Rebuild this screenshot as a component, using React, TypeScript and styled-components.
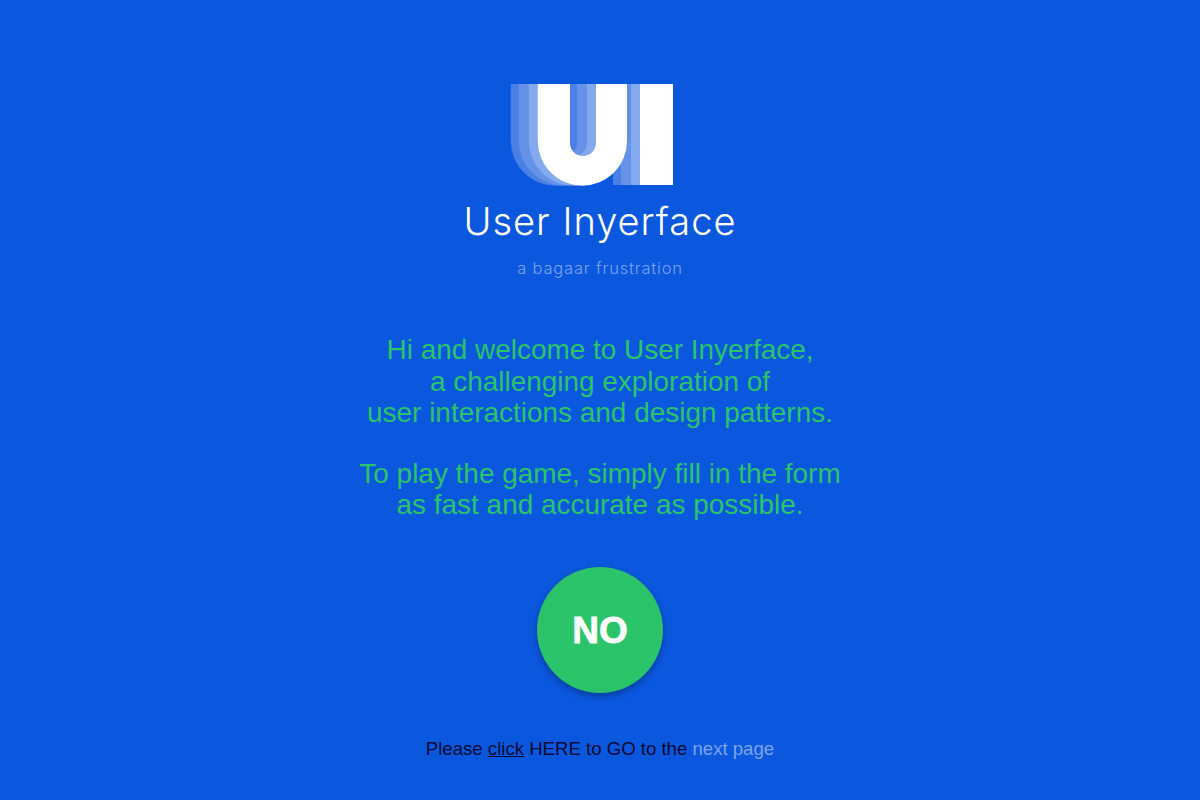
import styled, { createGlobalStyle } from 'styled-components';

const GlobalStyle = createGlobalStyle`
	html, body {
		margin: 0;
		padding: 0;
		background: #0b57dd;
	}
`;

const Page = styled.div`
	height: 800px;
	overflow: hidden;
	display: flex;
	flex-direction: column;
	align-items: center;
	padding-top: 84px;
	box-sizing: border-box;
	background: #0b57dd;
	font-family: "Liberation Sans", Arial, sans-serif;
`;

const Logo = styled.svg`
	display: block;
	width: 180px;
	height: 102px;
	flex: none;
`;

const Title = styled.h1`
	margin: 11px 0 0;
	font-family: Inter, "Open Sans", sans-serif;
	font-weight: 300;
	font-size: 38px;
	letter-spacing: 1px;
	line-height: 48px;
	color: #fff;
`;

const Tagline = styled.div`
	margin-top: 12px;
	font-family: Inter, "Open Sans", sans-serif;
	font-weight: 300;
	font-size: 16.5px;
	letter-spacing: 0.8px;
	line-height: 22px;
	color: #7ea4ee;
`;

const Intro = styled.p<{ $top: number }>`
	margin: ${({ $top }) => $top}px 0 0;
	font-size: 27.95px;
	line-height: 31.5px;
	color: #2bc46a;
	text-align: center;
`;

const NoButton = styled.button`
	width: 126px;
	height: 126px;
	margin-top: 46px;
	flex: none;
	border: 0;
	border-radius: 50%;
	background: #2bc46a;
	box-shadow: 0 3px 6px rgba(0, 0, 0, 0.3);
	color: #fff;
	font-family: "Liberation Sans", Arial, sans-serif;
	font-weight: 700;
	font-size: 37px;
	-webkit-text-stroke: 0.8px #fff;
	padding: 2px 0 0;
`;

const Footer = styled.div`
	margin-top: 45px;
	font-size: 18.6px;
	line-height: 22px;
	color: #000a33;
`;

const ClickLink = styled.span`
	text-decoration: underline;
`;

const NextLink = styled.span`
	color: #7ea4ee;
`;

const letters = (
	<>
		<path d="M27.75 0 V57 A44.6 44.6 0 0 0 117 57 V0 H86 V59 A13 13 0 0 1 60 59 V0 Z" fill="currentColor" />
		<rect x="130" y="0" width="33" height="101" fill="currentColor" />
	</>
);

const UiLogo = () => (
	<Logo viewBox="0 0 180 102">
		<g transform="translate(-27 0)" color="#4a80e5">{letters}</g>
		<g transform="translate(-19 0)" color="#6591e8">{letters}</g>
		<g transform="translate(-9 0)" color="#85a9ee">{letters}</g>
		<g color="#ffffff">{letters}</g>
	</Logo>
);

export default function App() {
	return (
		<Page>
			<GlobalStyle />
			<UiLogo />
			<Title>User Inyerface</Title>
			<Tagline>a bagaar frustration</Tagline>
			<Intro $top={55}>
				Hi and welcome to User Inyerface,
				<br />
				a challenging exploration of
				<br />
				user interactions and design patterns.
			</Intro>
			<Intro $top={29}>
				To play the game, simply fill in the form
				<br />
				as fast and accurate as possible.
			</Intro>
			<NoButton>NO</NoButton>
			<Footer>
				Please <ClickLink>click</ClickLink> HERE to GO to the <NextLink>next page</NextLink>
			</Footer>
		</Page>
	);
}
